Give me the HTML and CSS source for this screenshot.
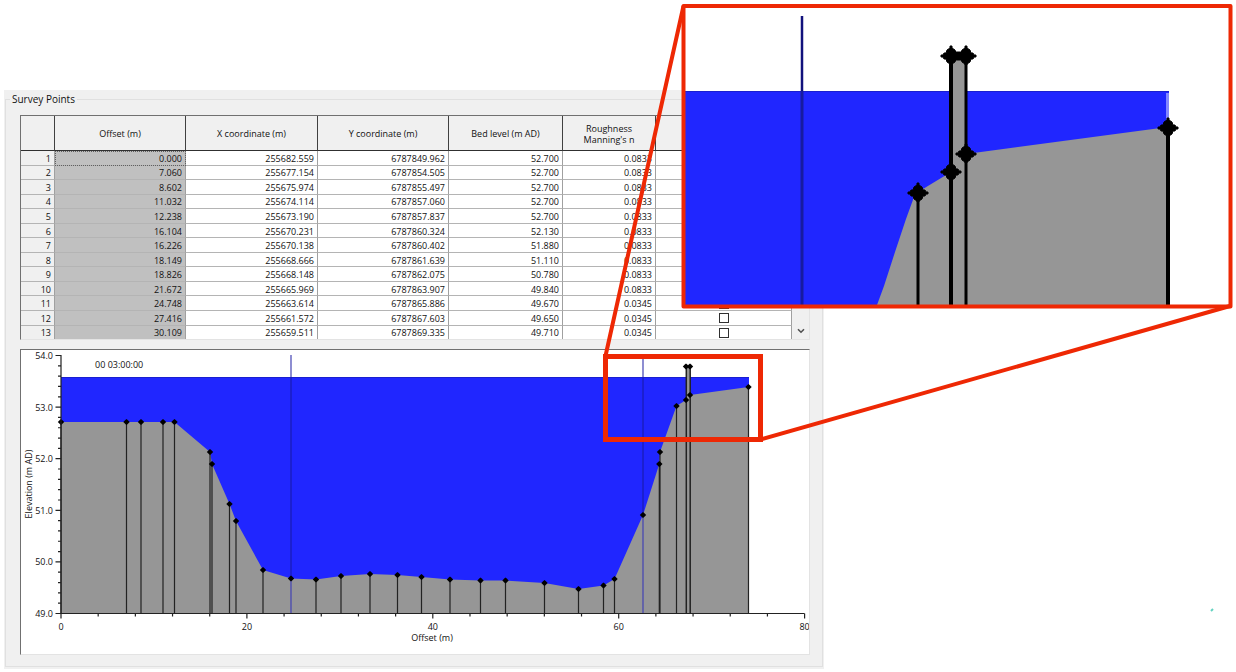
FILE: index.html
```html
<!DOCTYPE html>
<html lang="en">
<head>
<meta charset="utf-8">
<title>Survey Points</title>
<link rel="stylesheet" href="styles.css">
</head>
<body>
<main class="page">
  <section class="panel">
    <fieldset class="group">
      <legend class="group-title">Survey Points</legend>
      <div class="grid-frame">
        <table class="points">
          <colgroup>
            <col class="c-num"><col class="c-offset"><col class="c-x"><col class="c-y"><col class="c-bed"><col class="c-rough"><col class="c-panel">
          </colgroup>
          <thead>
            <tr><th></th><th>Offset (m)</th><th>X coordinate (m)</th><th>Y coordinate (m)</th><th>Bed level (m AD)</th><th>Roughness<br>Manning's n</th><th></th></tr>
          </thead>
          <tbody id="rows"></tbody>
        </table>
        <div class="scrollbar">
          <button class="scroll-down" type="button" aria-label="Scroll down">
            <svg class="chevron" viewBox="0 0 8 6"><path d="M1 1.2 4 4.2 7 1.2" fill="none" stroke="#505050" stroke-width="1.6"/></svg>
          </button>
        </div>
      </div>
      <div class="chart-frame">
        <svg class="chart" viewBox="21 350 788 304" role="img" aria-label="Cross section">
          <rect x="61" y="377" width="688" height="236" fill="#2026ff"/>
          <path d="M61 377.5H749" stroke="#1a1fd0" stroke-width="1"/>
          <path d="M291 377V613M643 377V613" stroke="#1a1db8" stroke-width="1.3"/>
          <path id="ground" fill="#969696"/>
          <path d="M291 355V377M643 355V377M291 579V613M643 515V613" stroke="#4343b4" stroke-width="1.2"/>
          <path id="stems" stroke="#222" stroke-width="1.2" fill="none"/>
          <path d="M686.3 366V613M690.2 366V613" stroke="#222" stroke-width="1.5"/>
          <g id="marks"></g>
          <path id="axes" stroke="#222" stroke-width="1.2" fill="none"/>
          <g class="chart-text" id="labels">
            <text x="95" y="368">00 03:00:00</text>
            <text x="432" y="641" text-anchor="middle">Offset (m)</text>
            <text transform="translate(32 484) rotate(-90)" text-anchor="middle">Elevation (m AD)</text>
          </g>
        </svg>
      </div>
    </fieldset>
  </section>
  <svg class="callout" viewBox="0 0 1236 672" aria-hidden="true">
    <defs>
      <path id="node" d="M-10-1H-8L-7-3H-5L-4-6-1-8V-10H1V-8L4-6 5-3H7L8-1H10V1H8L7 3H5L4 6 1 8V9H-1V8L-4 6-5 3H-7L-8 1H-10Z" stroke="#000" stroke-width="1"/>
    </defs>
    <rect x="683" y="6" width="547" height="300" fill="#fff"/>
    <rect x="685" y="91" width="484" height="214" fill="#2026ff"/>
    <path d="M685 91.5H1169" stroke="#1a1fd0"/>
    <path d="M1167.5 93V120" stroke="#8487ff" stroke-width="3"/>
    <path d="M802 16V91" stroke="#12127c" stroke-width="2.5"/>
    <path d="M802 91V305" stroke="#171ba0" stroke-width="3"/>
    <path d="M877 305 884 286 895 252 906 219 914 197 918 192 951 172V56H966V154L1168 127V305Z" fill="#969696"/>
    <path d="M918 192V305M966 56V305" stroke="#000" stroke-width="3"/>
    <path d="M951 56V305M1168 127V305" stroke="#000" stroke-width="4"/>
    <path d="M951 56H966" stroke="#000" stroke-width="9"/>
    <use href="#node" x="918" y="193"/><use href="#node" x="951" y="172"/><use href="#node" x="951" y="56"/>
    <use href="#node" x="966" y="56"/><use href="#node" x="966" y="154"/><use href="#node" x="1168" y="128"/>
    <g fill="none" stroke="#ee2804" stroke-linejoin="round">
      <path d="M683.5 6 605.5 356M1230 306 762 439" stroke-width="4"/>
      <rect x="683.5" y="6" width="547" height="300.5" stroke-width="4"/>
      <rect x="605.5" y="356.500" width="155" height="83" stroke-width="5" stroke-linejoin="miter"/>
    </g>
    <path d="M1211 611 1213 609" stroke="#62d2c0" stroke-width="2"/>
  </svg>
</main>
<script src="script.js"></script>
</body>
</html>
```
FILE: styles.css
```css
* { box-sizing: border-box; }

body {
  margin: 0;
  background: #fff;
  color: #111;
  font: 9px/12px "Open Sans", "Noto Sans", sans-serif;
}

.page {
  position: relative;
  display: grid;
  grid-template-columns: 2fr 1fr;
  padding: 90px 2px 2px 4px;
}

.panel {
  padding: 3px 1px 2px;
  background: #f0f0f0;
}

.group {
  min-width: 0;
  margin: 0;
  padding: 10px 12px 11px 14px;
  border: 1px solid #e0e0e0;
}

.group-title {
  margin-left: -10px;
  padding: 0 2px;
  font-size: 10px;
}

.grid-frame {
  display: flex;
  height: 225px;
  margin-bottom: 9px;
  border: 1px solid #707070;
  border-right-color: #e3e3e3;
  border-bottom-color: #e3e3e3;
}

.points {
  flex: 1;
  width: 100%;
  height: 100%;
  table-layout: fixed;
  border-collapse: separate;
  border-spacing: 0;
  background: #fff;
}

.c-num { width: 34px; }
.c-offset { width: 131px; }
.c-x { width: 132px; }
.c-y { width: 131px; }
.c-bed { width: 114px; }
.c-rough { width: 93px; }
.c-panel { width: 136px; }

.points th,
.points td {
  padding: 1px 3px 0;
  border-right: 1px solid #a0a0a0;
  border-bottom: 1px solid #b4b4b4;
  font-weight: normal;
  line-height: 11px;
  text-align: right;
}

.points tbody tr:last-child > * { border-bottom: 0; }

.points thead th {
  height: 35px;
  border-right-color: #404040;
  border-bottom-color: #303030;
  background: #f0f0f0;
  text-align: center;
}

.points tbody th { background: #f0f0f0; }
.points .selected { background: #c0c0c0; }

.points .focused {
  outline: 1px dotted #606060;
  outline-offset: -1px;
}

.tick {
  display: block;
  width: 10px;
  height: 10px;
  margin: 0 auto;
  appearance: none;
  border: 1px solid #303030;
  background: #fff;
}

.scrollbar {
  display: flex;
  flex: 0 0 17px;
  align-items: flex-end;
  background: #f0f0f0;
}

.scroll-down {
  display: flex;
  align-items: center;
  justify-content: center;
  width: 17px;
  height: 16px;
  padding: 0;
  border: 0;
  background: #f0f0f0;
}

.chevron {
  width: 8px;
  height: 6px;
}

.chart-frame {
  border: 1px solid #707070;
  border-right-color: #e3e3e3;
  border-bottom-color: #e3e3e3;
  background: #fff;
}

.chart {
  display: block;
  width: 100%;
  height: auto;
}

.chart-text {
  fill: #111;
  font-size: 9px;
}

.callout {
  position: absolute;
  top: 0;
  left: 0;
  width: 100%;
  height: auto;
  pointer-events: none;
}
```
FILE: script.js
```js
const survey = [
  ["0.000", "255682.559", "6787849.962", "52.700", "0.0833"],
  ["7.060", "255677.154", "6787854.505", "52.700", "0.0833"],
  ["8.602", "255675.974", "6787855.497", "52.700", "0.0833"],
  ["11.032", "255674.114", "6787857.060", "52.700", "0.0833"],
  ["12.238", "255673.190", "6787857.837", "52.700", "0.0833"],
  ["16.104", "255670.231", "6787860.324", "52.130", "0.0833"],
  ["16.226", "255670.138", "6787860.402", "51.880", "0.0833"],
  ["18.149", "255668.666", "6787861.639", "51.110", "0.0833"],
  ["18.826", "255668.148", "6787862.075", "50.780", "0.0833"],
  ["21.672", "255665.969", "6787863.907", "49.840", "0.0833"],
  ["24.748", "255663.614", "6787865.886", "49.670", "0.0345"],
  ["27.416", "255661.572", "6787867.603", "49.650", "0.0345"],
  ["30.109", "255659.511", "6787869.335", "49.710", "0.0345"]
];

document.getElementById("rows").innerHTML = survey.map((row, i) =>
  `<tr><th scope="row">${i + 1}</th>` +
  row.map((v, c) => `<td class="${c ? "" : "selected"}${!c && !i ? " focused" : ""}">${v}</td>`).join("") +
  `<td><input class="tick" type="checkbox" aria-label="Panel at point ${i + 1}"></td></tr>`
).join("");

// Section profile in chart units
const profile = [
  [61, 422], [126.5, 422], [141, 422], [163, 422], [174.5, 422], [210, 452], [212, 464],
  [229.5, 504], [236, 521], [263, 570], [291, 578.5], [316, 579.5], [341, 576], [370, 574],
  [397.5, 575], [421.5, 577], [450, 579.5], [480.5, 580.5], [505.5, 580.5], [544.5, 583],
  [578.5, 589], [603.5, 585.5], [614.5, 579], [643, 515], [659.3, 464], [660, 452],
  [676.5, 406], [686, 400], [686, 366.5], [690, 366.5], [690, 395], [748.5, 387]
];
const base = 613.5;

document.getElementById("ground").setAttribute("d",
  `M61 ${base}` + profile.map(p => `L${p[0]} ${p[1]}`).join("") + `V${base}Z`);
document.getElementById("stems").setAttribute("d",
  profile.filter(p => p[0] !== 291 && p[0] !== 643 && p[0] !== 686 && p[0] !== 690)
    .map(p => `M${p[0]} ${p[1]}V${base}`).join(""));
document.getElementById("marks").innerHTML = profile.map(p =>
  `<path d="M${p[0] - 3.2} ${p[1]}l2-2 1.2-1 1.2 1 2 2-2 2-1.2 1-1.2-1z"/>`).join("");

let axes = `M61 355V${base}H804.5`;
let labels = "";
for (let i = 0; i <= 25; i++) {
  const y = 355.5 + i * 10.32;
  axes += `M${i % 5 ? 58 : 55.5} ${y}H61`;
  if (i % 5 === 0) labels += `<text x="53" y="${y + 3.5}" text-anchor="end">${54 - i / 5}.0</text>`;
}
for (let i = 0; i <= 20; i++) {
  const x = 61 + i * 37.18;
  axes += `M${x} ${base}v${i % 5 ? 3 : 5}`;
  if (i % 5 === 0) labels += `<text x="${x}" y="630" text-anchor="middle">${i * 4}</text>`;
}
document.getElementById("axes").setAttribute("d", axes);
document.getElementById("labels").insertAdjacentHTML("beforeend", labels);
```
